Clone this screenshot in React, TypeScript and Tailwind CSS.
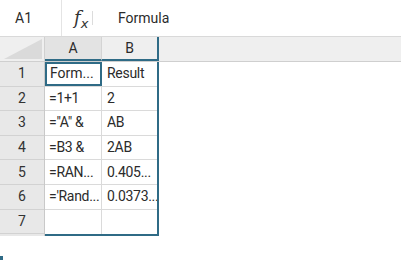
const rows: [string, string][] = [
  ["Form...", "Result"],
  ["=1+1", "2"],
  ['="A" &', "AB"],
  ["=B3 &", "2AB"],
  ["=RAN...", "0.405..."],
  ["='Rand...", "0.0373..."],
  ["", ""],
];

export default function App() {
  return (
    <div
      className="w-[401px] h-[260px] bg-white text-[#2b2b2b] text-[14px] overflow-hidden flex flex-col"
      style={{ fontFamily: "Roboto, 'Noto Sans', sans-serif" }}
    >
      {/* formula bar */}
      <div className="h-[37px] shrink-0 flex items-center border-b border-[#d9d9d9]">
        <div className="w-[62px] h-full flex items-center pl-[15px] border-r border-[#e4e4e4]">A1</div>
        <div className="w-[43px] h-full flex items-center">
          <span
            className="pl-[12px] w-[30px] flex items-end italic text-[#333]"
            style={{ fontFamily: "'DejaVu Serif', serif" }}
          >
            <span className="text-[18px] leading-none">f</span>
            <span className="text-[13px] leading-none translate-y-[3px]" style={{ fontFamily: "'DejaVu Sans', sans-serif" }}>
              x
            </span>
          </span>
          <div className="w-px h-[14px] bg-[#dcdcdc]" />
        </div>
        <div className="pl-[13px]">Formula</div>
      </div>

      {/* column headers */}
      <div className="h-[25px] shrink-0 flex bg-[#efefef] border-b border-[#cfcfcf]">
        <div className="w-[45px] h-full bg-[#efefef] border-r border-[#d0d0d0] relative">
          <svg className="absolute right-[2px] bottom-[2px]" width="38" height="20" viewBox="0 0 38 20">
            <polygon points="38,0 38,20 0,20" fill="#dadada" />
          </svg>
        </div>
        <div className="w-[57px] h-full flex items-center justify-center bg-[#e3e3e3] border-r border-[#d4d4d4] border-b-2 border-b-[#2f6b86]">
          A
        </div>
        <div className="w-[57px] h-full flex items-center justify-center bg-[#efefef] border-r-2 border-[#2f6b86] border-b-2 border-b-[#2f6b86]">
          B
        </div>
        <div className="flex-1" />
      </div>

      {/* data rows */}
      <div className="flex">
        <div className="w-[45px] flex flex-col bg-[#e8e8e8] border-r border-[#c9c9c9]">
          {rows.map((_, i) => (
            <div
              key={i}
              className="h-[24.6px] flex items-center justify-center border-b border-[#d2d2d2] text-[#333]"
            >
              {i + 1}
            </div>
          ))}
        </div>
        <div className="w-[114px] flex flex-col border-r-2 border-b-2 border-[#2f6b86]">
          {rows.map(([a, b], i) => (
            <div key={i} className="h-[24.6px] flex border-b border-[#dadada] last:border-b-0">
              <div
                className={
                  i === 0
                    ? "w-[57px] h-full flex items-center px-[3px] whitespace-nowrap overflow-hidden border-2 border-[#2f6b86]"
                    : "w-[57px] h-full flex items-center pl-[4px] whitespace-nowrap overflow-hidden border-r border-[#dadada] tracking-[-0.3px]"
                }
              >
                {a}
              </div>
              <div className="flex-1 h-full flex items-center pl-[5px] whitespace-nowrap overflow-hidden tracking-[-0.3px]">
                {b}
              </div>
            </div>
          ))}
        </div>
      </div>

      <div className="flex-1" />
      <div className="w-[3px] h-[4px] bg-[#2f6b86]" />
    </div>
  );
}
